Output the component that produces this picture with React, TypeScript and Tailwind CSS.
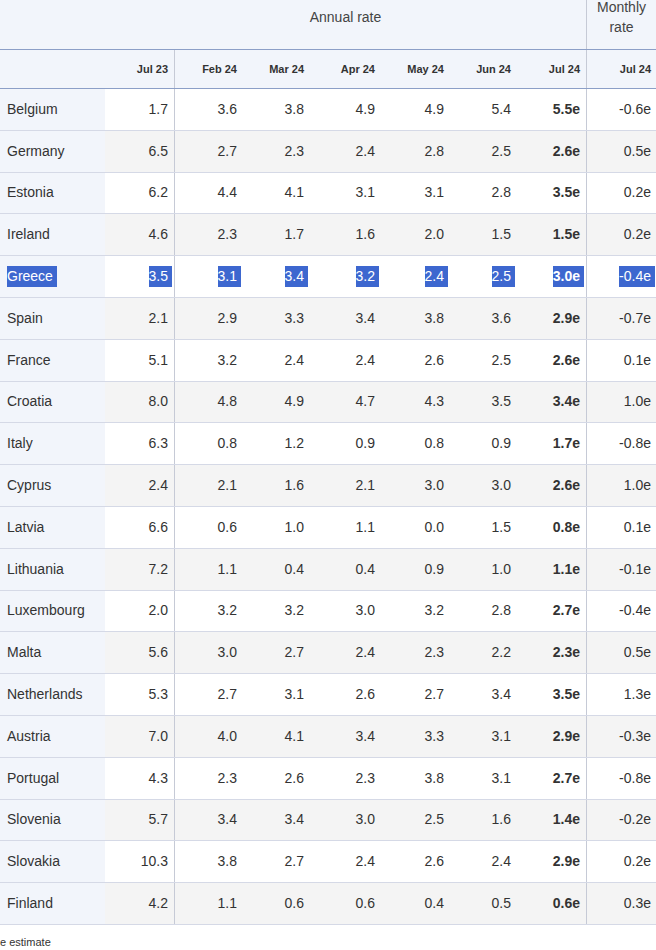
const months = ["Jul 23", "Feb 24", "Mar 24", "Apr 24", "May 24", "Jun 24", "Jul 24"];

const rows: [string, string[], string][] = [
  ["Belgium", ["1.7", "3.6", "3.8", "4.9", "4.9", "5.4", "5.5e"], "-0.6e"],
  ["Germany", ["6.5", "2.7", "2.3", "2.4", "2.8", "2.5", "2.6e"], "0.5e"],
  ["Estonia", ["6.2", "4.4", "4.1", "3.1", "3.1", "2.8", "3.5e"], "0.2e"],
  ["Ireland", ["4.6", "2.3", "1.7", "1.6", "2.0", "1.5", "1.5e"], "0.2e"],
  ["Greece", ["3.5", "3.1", "3.4", "3.2", "2.4", "2.5", "3.0e"], "-0.4e"],
  ["Spain", ["2.1", "2.9", "3.3", "3.4", "3.8", "3.6", "2.9e"], "-0.7e"],
  ["France", ["5.1", "3.2", "2.4", "2.4", "2.6", "2.5", "2.6e"], "0.1e"],
  ["Croatia", ["8.0", "4.8", "4.9", "4.7", "4.3", "3.5", "3.4e"], "1.0e"],
  ["Italy", ["6.3", "0.8", "1.2", "0.9", "0.8", "0.9", "1.7e"], "-0.8e"],
  ["Cyprus", ["2.4", "2.1", "1.6", "2.1", "3.0", "3.0", "2.6e"], "1.0e"],
  ["Latvia", ["6.6", "0.6", "1.0", "1.1", "0.0", "1.5", "0.8e"], "0.1e"],
  ["Lithuania", ["7.2", "1.1", "0.4", "0.4", "0.9", "1.0", "1.1e"], "-0.1e"],
  ["Luxembourg", ["2.0", "3.2", "3.2", "3.0", "3.2", "2.8", "2.7e"], "-0.4e"],
  ["Malta", ["5.6", "3.0", "2.7", "2.4", "2.3", "2.2", "2.3e"], "0.5e"],
  ["Netherlands", ["5.3", "2.7", "3.1", "2.6", "2.7", "3.4", "3.5e"], "1.3e"],
  ["Austria", ["7.0", "4.0", "4.1", "3.4", "3.3", "3.1", "2.9e"], "-0.3e"],
  ["Portugal", ["4.3", "2.3", "2.6", "2.3", "3.8", "3.1", "2.7e"], "-0.8e"],
  ["Slovenia", ["5.7", "3.4", "3.4", "3.0", "2.5", "1.6", "1.4e"], "-0.2e"],
  ["Slovakia", ["10.3", "3.8", "2.7", "2.4", "2.6", "2.4", "2.9e"], "0.2e"],
  ["Finland", ["4.2", "1.1", "0.6", "0.6", "0.4", "0.5", "0.6e"], "0.3e"],
];

const cols = "grid grid-cols-[105px_70px_68px_67px_71px_69px_67px_70px_69px]";

// border-r on Jul 23 and annual Jul 24
const cellEdge = (i: number) => (i === 0 || i === 6 ? "border-r border-[#c6cad6]" : "");

function Sel({ on, children }: { on: boolean; children: React.ReactNode }) {
  if (!on) return <>{children}</>;
  return (
    <span className="inline-block h-[21px] bg-[#3d67cf] pr-1 -mr-1 leading-[21px] text-white">
      {children}
    </span>
  );
}

export default function App() {
  return (
    <div className="w-[656px] bg-white font-['Liberation_Sans',Arial,sans-serif] text-[#333]">
      <div className="bg-[#f2f5fb]">
        {/* top of the header is scrolled off, so the labels sit high */}
        <div className={`${cols} h-[50px] grid-rows-[49px] border-b border-[#8c9fc7]`}>
          <div />
          <div className="col-span-7 flex items-center justify-center border-r border-[#c6cad6] pb-[15px] text-[14px] text-[#444]">
            Annual rate
          </div>
          <div className="flex items-center justify-center pb-[15px] text-center text-[14px] leading-5 text-[#444]">
            Monthly
            <br />
            rate
          </div>
        </div>
        <div className={`${cols} h-[39px] border-b border-[#8c9fc7] text-[11px] font-bold`}>
          <div />
          {months.map((m, i) => (
            <div key={i} className={`flex items-center justify-end pr-[6px] ${cellEdge(i)}`}>
              {m}
            </div>
          ))}
          <div className="flex items-center justify-end pr-[5px]">Jul 24</div>
        </div>
      </div>

      {rows.map(([name, vals, monthly], r) => {
        const sel = name === "Greece";
        const bg = r % 2 === 1 ? "bg-[#f4f4f4]" : "bg-white";
        return (
          <div key={name} className={`${cols} h-[41.8px] border-b border-[#d5d9e6] text-[14px] ${bg}`}>
            <div className="flex items-center bg-[#f2f5fb] pl-[7px]">
              <span className={sel ? "-ml-px pl-px" : ""}>
                <Sel on={sel}>{name}</Sel>
              </span>
            </div>
            {vals.map((v, i) => (
              <div
                key={i}
                className={`flex items-center justify-end pr-[6px] ${cellEdge(i)} ${i === 6 ? "font-bold" : ""}`}
              >
                <Sel on={sel}>{v}</Sel>
              </div>
            ))}
            <div className="flex items-center justify-end pr-[5px]">
              <Sel on={sel}>{monthly}</Sel>
            </div>
          </div>
        );
      })}

      <p className="mt-[11px] text-[11px] leading-[13px] text-[#333]">e estimate</p>
    </div>
  );
}
